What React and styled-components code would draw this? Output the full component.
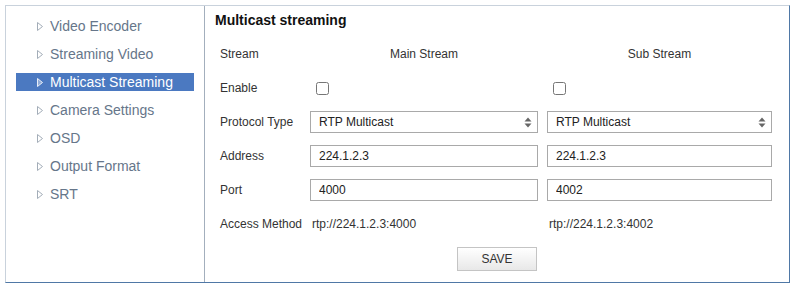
import styled, { createGlobalStyle } from "styled-components";

const GlobalStyle = createGlobalStyle`
  * { box-sizing: border-box; }
  body {
    margin: 0;
    background: #ffffff;
    font-family: "Liberation Sans", Arial, sans-serif;
  }
`;

const menu = [
  "Video Encoder",
  "Streaming Video",
  "Multicast Streaming",
  "Camera Settings",
  "OSD",
  "Output Format",
  "SRT",
];

function Arrow({ active }) {
  return (
    <Tri width="6" height="9" viewBox="0 0 6 9">
      <polygon
        points="0.5,0.5 5.5,4.5 0.5,8.5"
        fill={active ? "#8fabd8" : "none"}
        stroke={active ? "#e8eef8" : "#a3adb8"}
        strokeWidth="1"
      />
    </Tri>
  );
}

function SelectBox({ value }) {
  return (
    <SelectWrap>
      <Select defaultValue={value}>
        <option>RTP Multicast</option>
      </Select>
      <Spinner width="8" height="11" viewBox="0 0 8 11">
        <polygon points="4,0.5 7.5,4.5 0.5,4.5" fill="#666" />
        <polygon points="0.5,6.5 7.5,6.5 4,10.5" fill="#666" />
      </Spinner>
    </SelectWrap>
  );
}

export default function App() {
  return (
    <>
      <GlobalStyle />
      <Frame>
        <Sidebar>
          {menu.map((item) => (
            <MenuItem key={item} $active={item === "Multicast Streaming"}>
              <Arrow active={item === "Multicast Streaming"} />
              {item}
            </MenuItem>
          ))}
        </Sidebar>
        <Main>
          <Title>Multicast streaming</Title>
          <Form>
            <Label>Stream</Label>
            <Heading>Main Stream</Heading>
            <Heading>Sub Stream</Heading>

            <Label>Enable</Label>
            <Cell><Check type="checkbox" /></Cell>
            <Cell><Check type="checkbox" /></Cell>

            <Label>Protocol Type</Label>
            <Cell><SelectBox value="RTP Multicast" /></Cell>
            <Cell><SelectBox value="RTP Multicast" /></Cell>

            <Label>Address</Label>
            <Cell><Input defaultValue="224.1.2.3" /></Cell>
            <Cell><Input defaultValue="224.1.2.3" /></Cell>

            <Label>Port</Label>
            <Cell><Input defaultValue="4000" /></Cell>
            <Cell><Input defaultValue="4002" /></Cell>

            <Label>Access Method</Label>
            <Value>rtp://224.1.2.3:4000</Value>
            <Value>rtp://224.1.2.3:4002</Value>
          </Form>
          <ButtonRow>
            <SaveButton>SAVE</SaveButton>
          </ButtonRow>
        </Main>
      </Frame>
    </>
  );
}

const Frame = styled.div`
  display: flex;
  margin: 5px 0 0 5px;
  width: 785px;
  height: 278px;
  border: 1px solid #c9d2dc;
  border-right-color: #4f78a6;
  border-bottom-color: #4f78a6;
`;

const Sidebar = styled.div`
  width: 199px;
  flex-shrink: 0;
  border-right: 1px solid #a3afbd;
  padding: 11px 10px 0 10px;
`;

const MenuItem = styled.div`
  display: flex;
  align-items: center;
  height: 18px;
  margin-bottom: 10px;
  padding-left: 21px;
  font-size: 14px;
  line-height: 18px;
  color: ${(p) => (p.$active ? "#ffffff" : "#66768a")};
  background: ${(p) => (p.$active ? "#4b79c1" : "transparent")};
`;

const Tri = styled.svg`
  flex-shrink: 0;
  margin-right: 7px;
`;

const Main = styled.div`
  flex: 1;
  padding: 4px 0 0 10px;
`;

const Title = styled.div`
  font-size: 14px;
  font-weight: bold;
  line-height: 20px;
  color: #111;
`;

const Form = styled.div`
  display: grid;
  grid-template-columns: 81px 228px 225px;
  grid-template-rows: 35px repeat(5, 34px);
  column-gap: 9px;
  margin: 6px 0 0 5px;
  font-size: 12px;
  color: #333;
`;

const Label = styled.div`
  display: flex;
  align-items: center;
  white-space: nowrap;
`;

const Heading = styled.div`
  display: flex;
  align-items: center;
  justify-content: center;
`;

const Cell = styled.div`
  display: flex;
  align-items: center;
`;

const Value = styled.div`
  display: flex;
  align-items: center;
  padding-left: 2px;
`;

const Check = styled.input`
  width: 13px;
  height: 13px;
  margin: 0 0 0 6px;
`;

const SelectWrap = styled.div`
  position: relative;
  width: 100%;
`;

const Select = styled.select`
  appearance: none;
  width: 100%;
  height: 22px;
  border: 1px solid #a9a9a9;
  border-radius: 0;
  background: #fff;
  padding: 0 0 0 8px;
  font-family: "Liberation Sans", Arial, sans-serif;
  font-size: 12px;
  color: #222;
  outline: none;
`;

const Spinner = styled.svg`
  position: absolute;
  right: 6px;
  top: 6px;
  pointer-events: none;
`;

const Input = styled.input`
  width: 100%;
  height: 22px;
  border: 1px solid #a9a9a9;
  padding: 0 0 0 8px;
  font-family: "Liberation Sans", Arial, sans-serif;
  font-size: 12px;
  color: #222;
  outline: none;
`;

const ButtonRow = styled.div`
  display: flex;
  justify-content: center;
  margin-top: 6px;
  padding-right: 10px;
`;

const SaveButton = styled.button`
  width: 80px;
  height: 24px;
  border: 1px solid #c4c4c4;
  background: linear-gradient(#ffffff, #e8e8e8);
  font-family: "Liberation Sans", Arial, sans-serif;
  font-size: 12px;
  color: #333;
  cursor: pointer;
`;
